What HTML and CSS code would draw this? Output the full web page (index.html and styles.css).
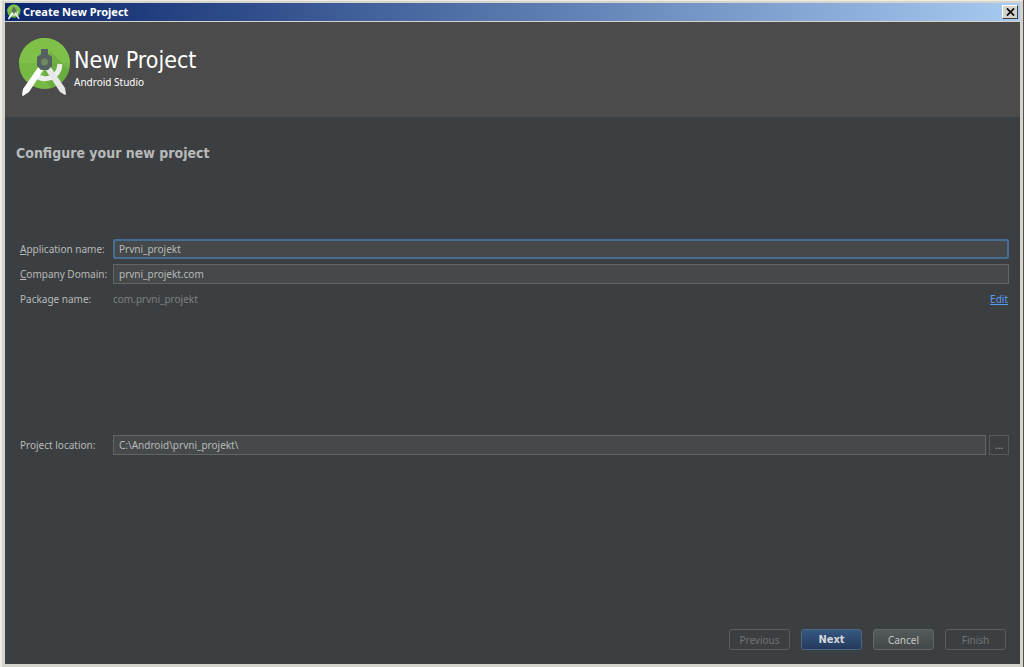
FILE: index.html
```html
<!DOCTYPE html>
<html lang="en">
<head>
<meta charset="utf-8">
<title>Create New Project</title>
<link rel="stylesheet" href="styles.css">
</head>
<body>
<svg class="sprite" aria-hidden="true">
  <defs>
    <clipPath id="disc"><circle cx="26.500" cy="26.500" r="25.500"/></clipPath>
    <symbol id="studio" viewBox="0 0 54 60">
      <circle cx="26.500" cy="26.500" r="25.500" fill="#76b944"/>
      <g clip-path="url(#disc)">
        <path d="M0 0h54v26H0z" fill="#7fc148"/>
        <path d="M32 14L56 38V60H38L26 40z" fill="#5f9f3b" opacity=".5"/>
      </g>
      <path d="M17 38c9 7 24 4 25-11" fill="none" stroke="#eceeed" stroke-width="5"/>
      <path d="M21 29l5 3L11 55l-6 4-1-1 1-6z" fill="#fff"/>
      <path d="M32 29l-5 3 15 23 5 3 1-1-1-6z" fill="#e6e8e8"/>
      <path d="M23 12h7v5l4 3v9l-4 4h-7l-4-4v-9l4-3z" fill="#546160"/>
      <circle cx="26.500" cy="25" r="3.500" fill="#6d8a60"/>
    </symbol>
  </defs>
</svg>
<div class="window">
  <div class="titlebar">
    <svg class="title-icon" aria-hidden="true"><use href="#studio"/></svg>
    <span class="title">Create New Project</span>
    <button class="close" type="button" aria-label="Close">
      <svg viewBox="0 0 10 8" aria-hidden="true"><path d="M1 0l8 8M9 0L1 8" stroke="#111" stroke-width="2"/></svg>
    </button>
  </div>
  <header class="banner">
    <svg class="logo" aria-hidden="true"><use href="#studio"/></svg>
    <div>
      <h1>New Project</h1>
      <p class="product">Android Studio</p>
    </div>
  </header>
  <main>
    <h2>Configure your new project</h2>
    <form class="form" id="project">
      <div class="row">
        <label for="app"><u>A</u>pplication name:</label>
        <input class="field focused" id="app" type="text" value="Prvni_projekt">
      </div>
      <div class="row">
        <label for="domain"><u>C</u>ompany Domain:</label>
        <input class="field" id="domain" type="text" value="prvni_projekt.com">
      </div>
      <div class="row">
        <span class="label">Package name:</span>
        <span class="package">com.prvni_projekt</span>
        <a class="edit" href="#">Edit</a>
      </div>
      <div class="row location">
        <label for="location">Project location:</label>
        <input class="field" id="location" type="text" value="C:\Android\prvni_projekt\">
        <button class="browse" type="button" aria-label="Browse">...</button>
      </div>
    </form>
  </main>
  <footer>
    <button class="btn" type="button" disabled>Previous</button>
    <button class="btn primary" type="submit" form="project">Next</button>
    <button class="btn plain" type="button">Cancel</button>
    <button class="btn" type="button" disabled>Finish</button>
  </footer>
</div>
</body>
</html>
```
FILE: styles.css
```css
* { box-sizing: border-box; }
body {
  margin: 0;
  background: #d6d3cc;
  color: #b7b9ba;
  font: 10px/14px "Noto Sans", "DejaVu Sans Condensed", sans-serif;
}
h1, h2, p { margin: 0; }
button, input { font: inherit; color: inherit; }
.sprite { position: absolute; width: 0; height: 0; }
.window {
  display: flex;
  flex-direction: column;
  min-height: 100vh;
  padding: 3px 3px 3px 5px;
  border-right: 1px solid #55534f;
  background: #d6d3cc;
  box-shadow: inset 2px 1px 0 #eeede4;
}
.titlebar {
  display: flex;
  align-items: center;
  height: 18px;
  margin-bottom: 1px;
  padding: 0 2px;
  gap: 2px;
  background: linear-gradient(90deg, #0b266b, #a6caf0);
}
.title-icon { width: 14px; height: 16px; }
.title { flex: 1; color: #fff; font-size: 11px; font-weight: bold; }
.close {
  display: flex;
  align-items: center;
  justify-content: center;
  width: 16px;
  height: 14px;
  padding: 0;
  background: #d6d3cc;
  border: 1px solid;
  border-color: #fff #404040 #404040 #fff;
}
.close svg { width: 9px; height: 8px; }
.banner {
  display: flex;
  gap: 2px;
  height: 95px;
  padding: 15px 13px;
  background: #4b4b4b;
  color: #fff;
}
.logo { width: 54px; height: 60px; }
h1, h2, .primary { font-family: "DejaVu Sans Condensed", "DejaVu Sans", sans-serif; }
h1 { margin-top: 8px; font-size: 23px; line-height: 30px; font-weight: normal; }
.product { line-height: 14px; }
main { flex: 1; padding: 27px 11px 0 11px; background: #3c3f41; }
h2 { font-size: 14px; line-height: 18px; }
.form { display: grid; gap: 5px; margin-top: 77px; padding-left: 4px; }
.row { display: flex; align-items: center; height: 20px; }
.row label, .label { width: 93px; flex: none; white-space: nowrap; }
.field {
  flex: 1;
  min-width: 0;
  height: 20px;
  padding: 0 5px;
  background: #45494a;
  border: 1px solid #626566;
  outline: none;
}
.focused { border: 2px solid #466d94; border-radius: 2px; padding: 0 4px; }
.package { flex: 1; color: #7d7f80; }
.edit { color: #589df6; margin-right: 1px; }
.location { margin-top: 121px; }
.browse {
  width: 20px;
  height: 20px;
  margin-left: 3px;
  padding: 0;
  background: #3c3f41;
  border: 1px solid #565859;
  color: #a0a2a3;
  line-height: 14px;
}
footer {
  display: flex;
  justify-content: flex-end;
  gap: 11px;
  padding: 0 14px 14px;
  background: #3c3f41;
}
.btn {
  width: 61px;
  height: 21px;
  padding: 0;
  background: #3c3f41;
  border: 1px solid #5a5d5e;
  border-radius: 3px;
}
.btn:disabled { color: #707274; }
.primary {
  background: linear-gradient(#365880, #24395c);
  border-color: #4c6585;
  color: #d5d9dd;
  font-size: 11px;
  font-weight: bold;
}
.plain { background: linear-gradient(#555a5c, #434748); border-color: #626566; color: #c4c6c7; }
```
